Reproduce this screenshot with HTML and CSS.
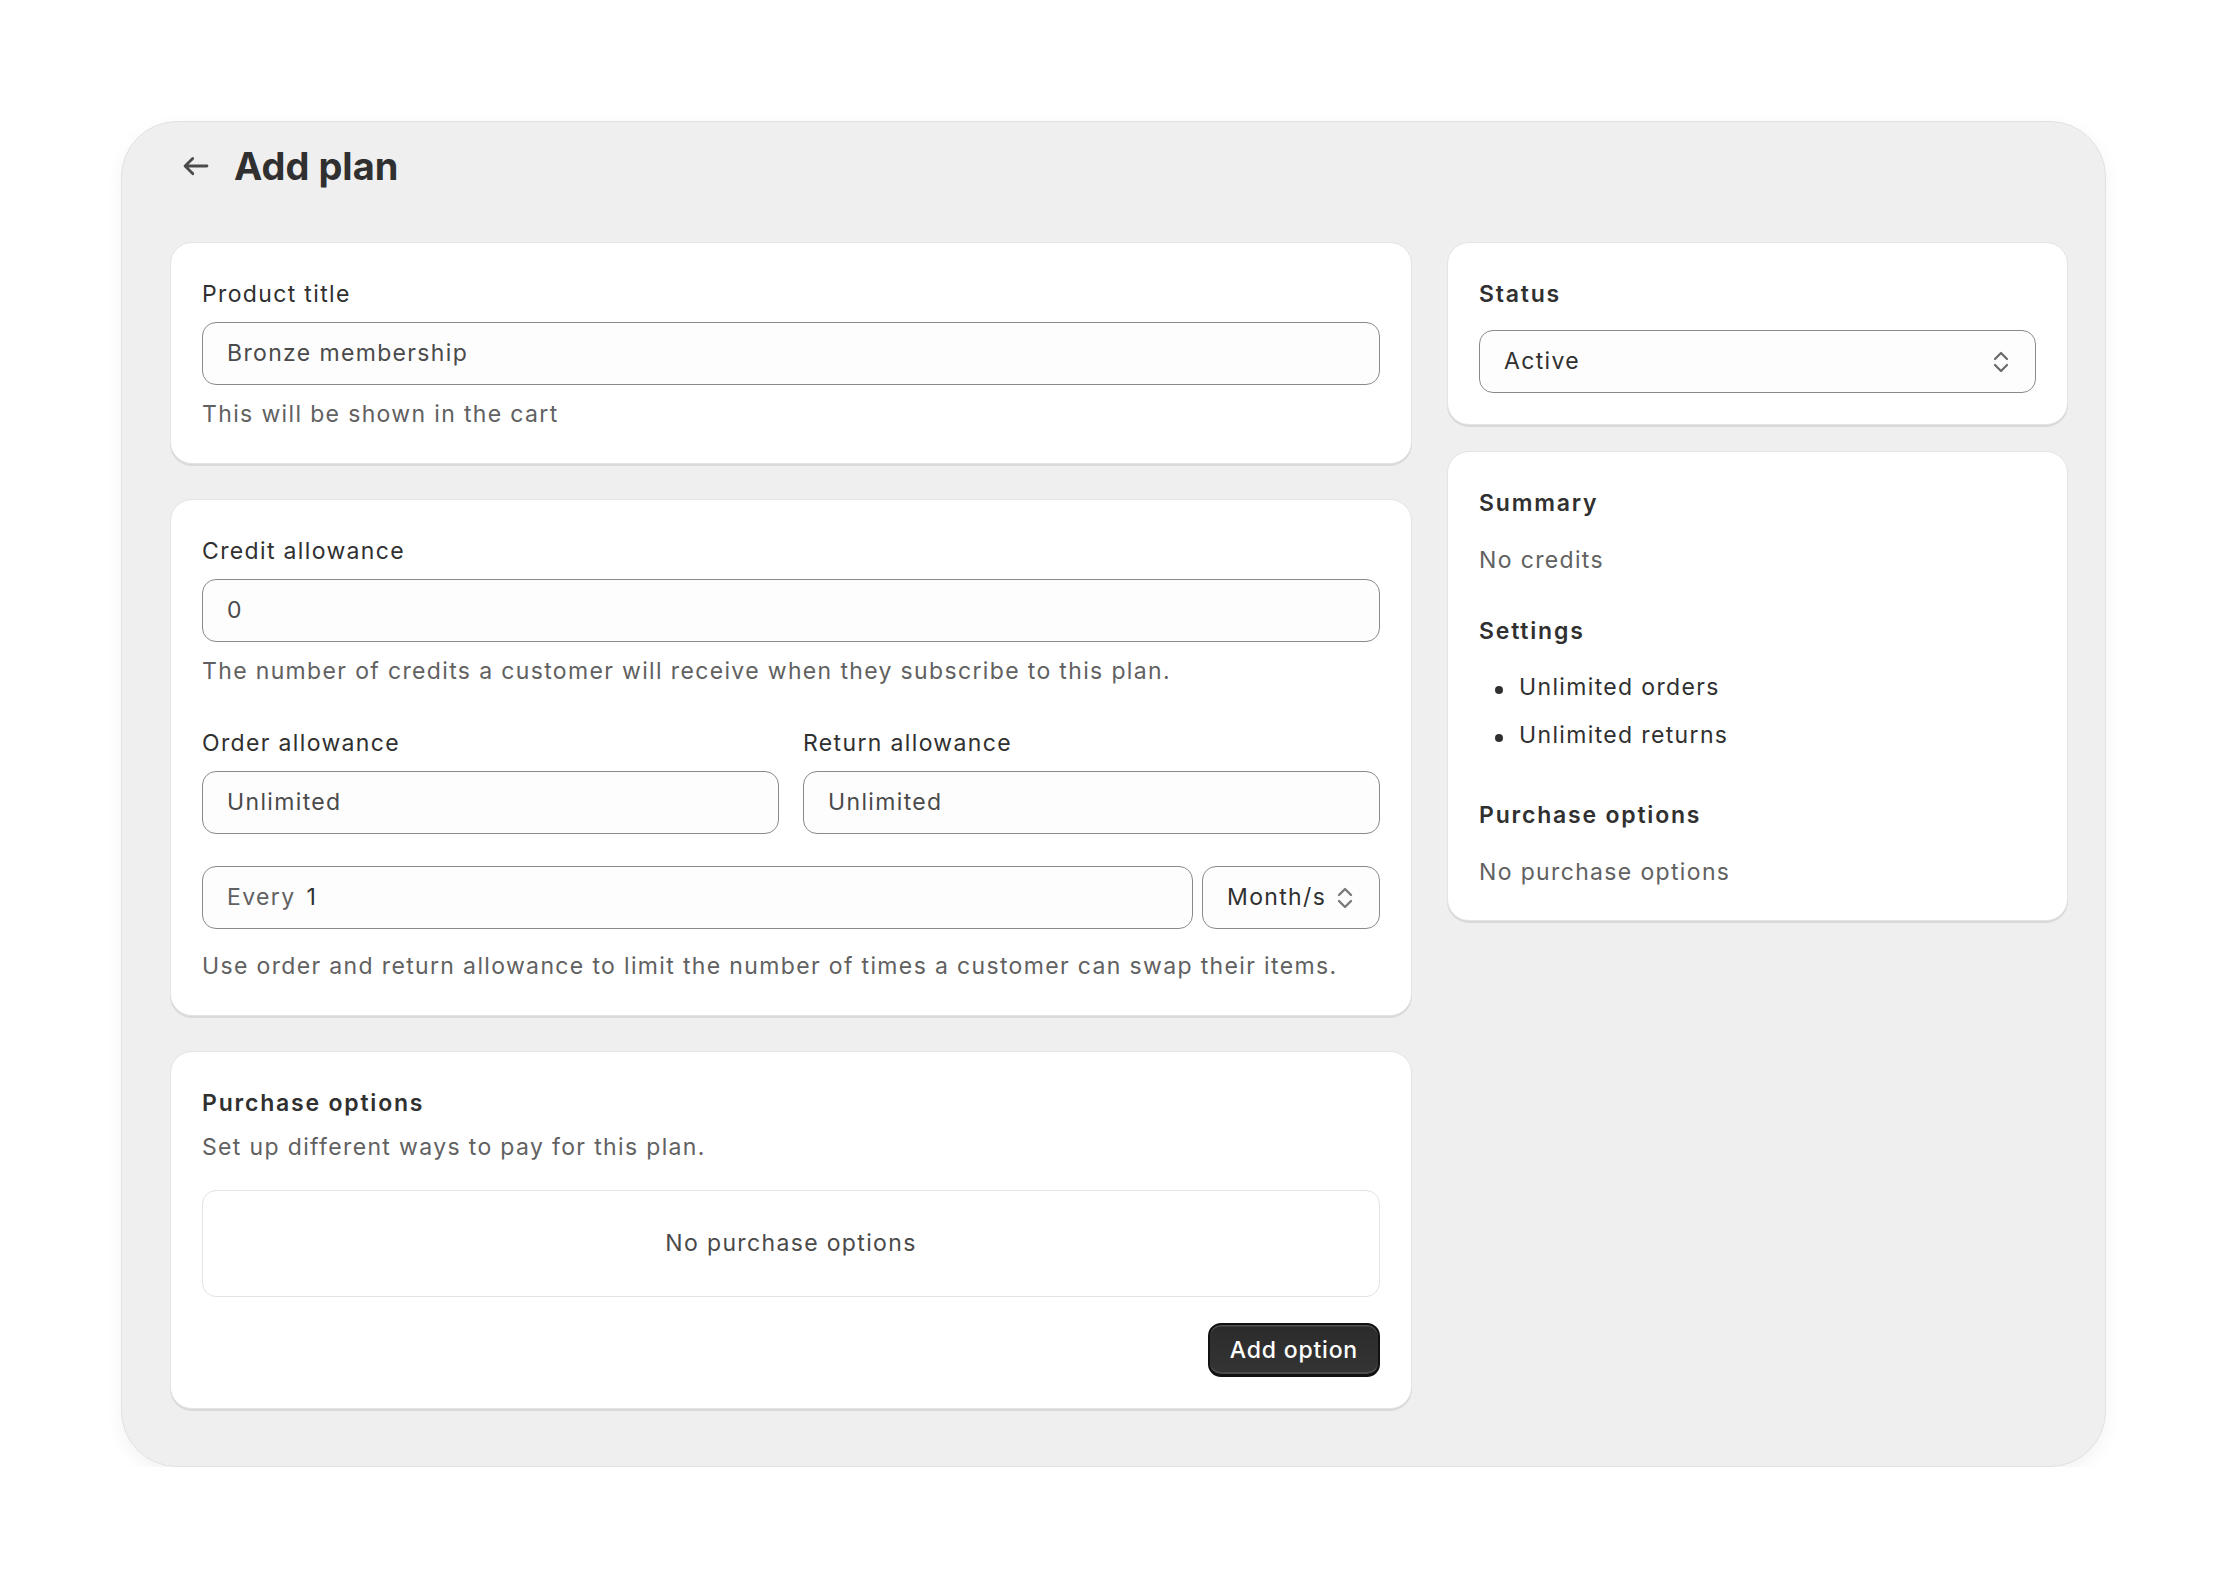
FILE: index.html
```html
<!DOCTYPE html>
<html lang="en">
<head>
<meta charset="utf-8">
<title>Add plan</title>
<link rel="stylesheet" href="styles.css">
</head>
<body>
<div class="frame">
  <header class="page-header">
    <button class="back" type="button" aria-label="Back">
      <svg viewBox="0 0 20 20" width="38" height="38"><path fill="#4a4a4a" d="M16.5 10a.75.75 0 0 1-.75.75h-9.690l2.720 2.720a.75.75 0 1 1-1.060 1.060l-4-4a.75.75 0 0 1 0-1.060l4-4a.75.75 0 0 1 1.060 1.060l-2.720 2.720h9.690a.75.75 0 0 1 .75.75Z"/></svg>
    </button>
    <h1 class="title">Add plan</h1>
  </header>

  <div class="layout">
    <div class="col col-main">
      <section class="card">
        <div class="label">Product title</div>
        <div class="input"><span class="value">Bronze membership</span></div>
        <p class="help">This will be shown in the cart</p>
      </section>

      <section class="card">
        <div class="label">Credit allowance</div>
        <div class="input"><span class="value">0</span></div>
        <p class="help">The number of credits a customer will receive when they subscribe to this plan.</p>

        <div class="pair">
          <div class="field">
            <div class="label">Order allowance</div>
            <div class="input"><span class="value">Unlimited</span></div>
          </div>
          <div class="field">
            <div class="label">Return allowance</div>
            <div class="input"><span class="value">Unlimited</span></div>
          </div>
        </div>

        <div class="interval">
          <div class="input grow"><span class="prefix">Every</span><span class="strong">1</span></div>
          <div class="input select compact"><span class="strong">Month/s</span>
            <svg class="chev" viewBox="0 0 16 24" width="16" height="24"><path d="M2 9l6-6 6 6M2 15l6 6 6-6" fill="none" stroke="#7a7a7a" stroke-width="2.4" stroke-linecap="round" stroke-linejoin="round"/></svg>
          </div>
        </div>
        <p class="help help-last">Use order and return allowance to limit the number of times a customer can swap their items.</p>
      </section>

      <section class="card">
        <h2 class="heading">Purchase options</h2>
        <p class="help help-sub">Set up different ways to pay for this plan.</p>
        <div class="empty">No purchase options</div>
        <div class="actions">
          <button class="primary" type="button">Add option</button>
        </div>
      </section>
    </div>

    <div class="col col-side">
      <section class="card">
        <h2 class="heading">Status</h2>
        <div class="input select status-select"><span class="strong">Active</span>
          <svg class="chev" viewBox="0 0 16 24" width="16" height="24"><path d="M2 9l6-6 6 6M2 15l6 6 6-6" fill="none" stroke="#6a6a6a" stroke-width="2.2" stroke-linecap="round" stroke-linejoin="round"/></svg>
        </div>
      </section>

      <section class="card summary">
        <div class="block">
          <h2 class="heading">Summary</h2>
          <p class="help">No credits</p>
        </div>
        <div class="block">
          <h2 class="heading">Settings</h2>
          <ul class="list">
            <li>Unlimited orders</li>
            <li>Unlimited returns</li>
          </ul>
        </div>
        <div class="block">
          <h2 class="heading">Purchase options</h2>
          <p class="help">No purchase options</p>
        </div>
      </section>
    </div>
  </div>
</div>
</body>
</html>
```

FILE: styles.css
```css
* { box-sizing: border-box; }

html, body {
  margin: 0;
  padding: 0;
  background: #ffffff;
}

body {
  font-family: Inter, "Noto Sans", "Liberation Sans", sans-serif;
  font-size: 23px;
  line-height: 35px;
  letter-spacing: 1.35px;
  color: #303030;
}

.frame {
  width: 1985px;
  margin: 121px auto 0 121px;
  background: #efefef;
  border: 1px solid #e2e2dd;
  border-radius: 56px;
  padding: 20px 37px 57px 48px;
  box-shadow: 0 6px 18px rgba(0, 0, 0, 0.05);
}

.page-header {
  display: flex;
  align-items: center;
  height: 48px;
  margin-bottom: 52px;
}

.back {
  display: flex;
  align-items: center;
  justify-content: center;
  width: 38px;
  height: 38px;
  padding: 0;
  margin-left: 7px;
  margin-right: 19px;
  background: none;
  border: 0;
}

.title {
  margin: 0;
  font-size: 38px;
  line-height: 48px;
  font-weight: 700;
  letter-spacing: 0;
  color: #303030;
}

.layout {
  display: grid;
  grid-template-columns: 1242px 621px;
  column-gap: 35px;
  align-items: start;
}

.col {
  display: flex;
  flex-direction: column;
}

.col-main { gap: 35px; }
.col-side { gap: 26px; }

.card {
  background: #ffffff;
  border: 1px solid #e4e4e4;
  border-radius: 22px;
  padding: 34px 31px 31px 31px;
  box-shadow: 0 2px 0 rgba(0, 0, 0, 0.09);
}

.label {
  color: #303030;
  margin-bottom: 10px;
}

.heading {
  margin: 0;
  font-size: 23px;
  line-height: 35px;
  font-weight: 600;
  letter-spacing: 1.8px;
  color: #303030;
}

.input {
  display: flex;
  align-items: center;
  height: 63px;
  padding: 0 24px;
  background: #fdfdfd;
  border: 1.5px solid #8a8a8a;
  border-radius: 14px;
}

.value { color: #4a4a4a; }
.strong { color: #303030; }
.prefix { color: #616161; margin-right: 11px; }

.help {
  margin: 12px 0 0;
  color: #616161;
}

.pair {
  display: grid;
  grid-template-columns: 1fr 1fr;
  column-gap: 24px;
  margin-top: 37px;
}

.interval {
  display: flex;
  gap: 9px;
  margin-top: 32px;
}

.grow { flex: 1; }

.select {
  justify-content: space-between;
}

.compact {
  width: 178px;
  padding: 0 26px 0 24px;
  gap: 8px;
}

.chev { flex: none; }

.help-last { margin-top: 20px; }

.help-sub { margin-top: 9px; }

.status-select {
  margin-top: 18px;
  padding-right: 26px;
}

.empty {
  margin-top: 25px;
  height: 107px;
  display: flex;
  align-items: center;
  justify-content: center;
  border: 1.5px solid #e3e3e3;
  border-radius: 14px;
  color: #4a4a4a;
}

.actions {
  display: flex;
  justify-content: flex-end;
  margin-top: 26px;
}

.primary {
  height: 54px;
  padding: 0 20px;
  font-family: inherit;
  font-size: 23px;
  font-weight: 500;
  letter-spacing: 0.8px;
  color: #ffffff;
  background: linear-gradient(#2b2b2b, #343434);
  border: 2px solid #111111;
  border-bottom-width: 3px;
  border-radius: 13px;
  box-shadow: inset 0 1.5px 0 rgba(255, 255, 255, 0.18), inset 0 -2px 0 rgba(255, 255, 255, 0.12);
}

.summary {
  display: flex;
  flex-direction: column;
  gap: 36px;
  padding-bottom: 30px;
}

.summary .help { margin-top: 22px; }

.list {
  margin: 21px 0 9px;
  padding: 0 0 0 40px;
  list-style: none;
}

.list li {
  position: relative;
  margin-bottom: 13px;
}

.list li:last-child { margin-bottom: 0; }

.list li::before {
  content: "";
  position: absolute;
  left: -24px;
  top: 16px;
  width: 8px;
  height: 8px;
  border-radius: 50%;
  background: #303030;
}
```
